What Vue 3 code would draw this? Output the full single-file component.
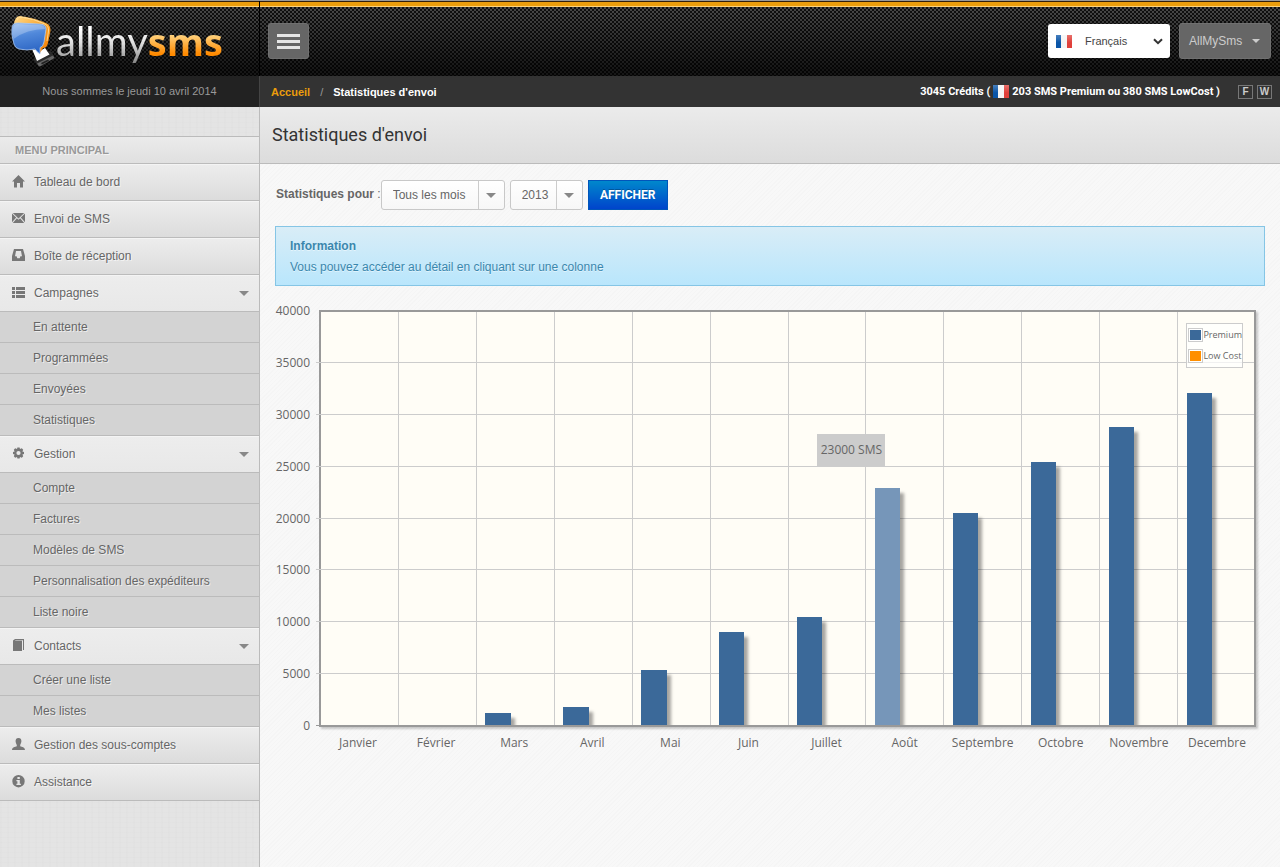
<script setup>
import { ref } from 'vue'

const month = ref('Tous les mois')
const year = ref('2013')
const lang = ref('Français')

const menu = [
  { label: 'Tableau de bord', icon: 'home' },
  { label: 'Envoi de SMS', icon: 'mail' },
  { label: 'Boîte de réception', icon: 'inbox' },
  { label: 'Campagnes', icon: 'list', items: ['En attente', 'Programmées', 'Envoyées', 'Statistiques'] },
  { label: 'Gestion', icon: 'cog', items: ['Compte', 'Factures', 'Modèles de SMS', 'Personnalisation des expéditeurs', 'Liste noire'] },
  { label: 'Contacts', icon: 'book', items: ['Créer une liste', 'Mes listes'] },
  { label: 'Gestion des sous-comptes', icon: 'user' },
  { label: 'Assistance', icon: 'info' },
]

const icons = {
  home: 'M6.5 0L13 6.6H11V12.5H8V8H5V12.5H2V6.6H0Z',
  mail: 'M0 1.5L4.2 5.6L0 10.2ZM0.8 1H12.2L6.5 6.6ZM13 1.5V10.2L8.8 5.6ZM0.8 11L4.9 6.3L6.5 7.8L8.1 6.3L12.2 11Z',
  inbox: 'M2 0H11L13 7V12H0V7ZM4 2L3 7.3H4.6L5.3 9.2H7.7L8.4 7.3H10L9 2Z',
  list: 'M0 1H3V4H0ZM4 1H13V4H4ZM0 5H3V8H0ZM4 5H13V8H4ZM0 9H3V12H0ZM4 9H13V12H4Z',
  cog: 'M5.4 0.5H7.6L8 2.1L9.8 1.3L11.2 2.7L10.4 4.4L12 4.9V7.1L10.4 7.6L11.2 9.3L9.8 10.7L8 9.9L7.6 11.5H5.4L5 9.9L3.2 10.7L1.8 9.3L2.6 7.6L1 7.1V4.9L2.6 4.4L1.8 2.7L3.2 1.3L5 2.1ZM6.5 3.9A2.1 2.1 0 1 0 6.5 8.1A2.1 2.1 0 1 0 6.5 3.9Z',
  book: 'M1 1.6L3 0H12V11H11V1.2H3.5L3 1.8H10V12H1Z',
  user: 'M6.5 0C8.8 0 9.6 1.7 9.4 3.6C9.2 5.2 8.5 6.3 8.2 7V8.3C10 9 12.8 9.3 13 12H0C0.2 9.3 3 9 4.8 8.3V7C4.4 6.3 3.8 5.2 3.6 3.6C3.4 1.7 4.2 0 6.5 0Z',
  info: 'M6.5 0A6.2 6.2 0 1 0 6.5 12.4A6.2 6.2 0 1 0 6.5 0ZM5.4 2H7.8V4H5.4ZM4.4 5H7.8V8.7H8.9V10H4.4V8.7H5.4V6.2H4.4Z',
}

const max = 40000
const ticks = [40000, 35000, 30000, 25000, 20000, 15000, 10000, 5000, 0]
const data = [
  { name: 'Janvier', sms: 0 },
  { name: 'Février', sms: 0 },
  { name: 'Mars', sms: 1200 },
  { name: 'Avril', sms: 1750 },
  { name: 'Mai', sms: 5300 },
  { name: 'Juin', sms: 9000 },
  { name: 'Juillet', sms: 10500 },
  { name: 'Août', sms: 23000, active: true },
  { name: 'Septembre', sms: 20500 },
  { name: 'Octobre', sms: 25500 },
  { name: 'Novembre', sms: 28850 },
  { name: 'Decembre', sms: 32200 },
]
</script>

<template>
  <div class="page">
    <header class="top">
      <div class="brand">
        <svg class="mark" viewBox="0 0 46 54" aria-hidden="true">
          <defs>
            <linearGradient id="gBlue" x1="0" y1="0" x2="0.2" y2="1">
              <stop offset="0" stop-color="#8fb8ef" />
              <stop offset="0.45" stop-color="#5088da" />
              <stop offset="1" stop-color="#2d66c4" />
            </linearGradient>
            <linearGradient id="gOrange" x1="0" y1="0" x2="1" y2="1">
              <stop offset="0" stop-color="#ffd98a" />
              <stop offset="0.5" stop-color="#f9a62c" />
              <stop offset="1" stop-color="#f57a00" />
            </linearGradient>
          </defs>
          <path d="M23 44L40 36Q42 36 44 42L30 51Q28 51 23 44Z" fill="#2b2b2b" />
          <path d="M27 48.5L43 40.5L44.5 43L30 51.5Q28.5 51.5 27 48.5Z" fill="#666" />
          <path d="M31 48L38 44.5L39 45.8L32 49.5Z" fill="#222" />
          <path d="M22 34L30 36L35 33L39.5 39.5L27 46Z" fill="#fff" />
          <path d="M4 9Q5 1 10 1Q25 3 36 8Q41 10 40.5 16L38 28Q37 33 33 33L30 38L28 30Z" fill="url(#gOrange)" />
          <path d="M7 5Q8 2 11 2Q25 4 35 9Q39 11 38.5 16L37 26" fill="none" stroke="#ffe3a6" stroke-width="0.8" />
          <path d="M2 13Q2 8 8 8L29 9Q36 9 36 14L34 27Q33 32 30 32.5V39Q27 37 25 34Q17 36 9 34Q5 33 4 29Q1 20 2 13Z" fill="url(#gBlue)" stroke="#a9c8f2" stroke-width="0.8" />
          <path d="M3 13Q3 9 8 9L29 10Q35 10 35 14Q17 14 3.5 24Q2 19 3 13Z" fill="#fff" opacity="0.25" />
        </svg>
        <span class="wordmark"><span class="silver">allmy</span><span class="gold">sms</span></span>
      </div>
      <div class="tools">
        <button class="burger" type="button" aria-label="Menu"><i></i><i></i><i></i></button>
        <label class="lang">
          <i class="flag"></i>
          <select v-model="lang" aria-label="Langue"><option>Français</option></select>
          <svg viewBox="0 0 10 7" aria-hidden="true"><path d="M1 1.2L5 5.2L9 1.2" fill="none" stroke="#333" stroke-width="2" /></svg>
        </label>
        <button class="account" type="button">AllMySms<i class="caret"></i></button>
      </div>
    </header>

    <div class="bar">
      <div class="date">Nous sommes le jeudi 10 avril 2014</div>
      <nav class="crumbs">
        <a href="#">Accueil</a><span class="sep">/</span><b>Statistiques d'envoi</b>
      </nav>
      <div class="credits">3045 Crédits (<i class="flag"></i>203 SMS Premium ou 380 SMS LowCost )</div>
      <div class="modes"><button type="button">F</button><button type="button">W</button></div>
    </div>

    <div class="body">
      <aside class="side">
        <h2>MENU PRINCIPAL</h2>
        <ul class="menu">
          <li v-for="m in menu" :key="m.label">
            <a href="#" class="entry" :class="{ open: m.items }">
              <svg viewBox="0 0 13 13" aria-hidden="true"><path :d="icons[m.icon]" fill-rule="evenodd" /></svg>
              <span>{{ m.label }}</span>
              <i v-if="m.items" class="caret"></i>
            </a>
            <ul v-if="m.items" class="sub">
              <li v-for="s in m.items" :key="s"><a href="#">{{ s }}</a></li>
            </ul>
          </li>
        </ul>
      </aside>

      <main class="main">
        <div class="title"><h1>Statistiques d'envoi</h1></div>
        <div class="content">
          <form class="filter" @submit.prevent>
            <label for="month"><b>Statistiques pour</b> :</label>
            <div class="pick month">
              <select id="month" v-model="month"><option>Tous les mois</option></select>
              <i class="caret"></i>
            </div>
            <div class="pick year">
              <select v-model="year" aria-label="Année"><option>2013</option></select>
              <i class="caret"></i>
            </div>
            <button class="go" type="submit">AFFICHER</button>
          </form>

          <div class="notice">
            <b>Information</b>
            <p>Vous pouvez accéder au détail en cliquant sur une colonne</p>
          </div>

          <div class="chart">
            <div class="yaxis"><span v-for="t in ticks" :key="t">{{ t }}</span></div>
            <div class="plot">
              <div class="rows"><i v-for="n in 8" :key="n"></i></div>
              <div class="cols">
                <div v-for="d in data" :key="d.name" class="col">
                  <div class="well">
                    <div
                      v-if="d.sms"
                      class="stick"
                      :class="{ active: d.active }"
                      :style="{ height: (d.sms / max) * 100 + '%' }"
                    ></div>
                  </div>
                  <div v-if="d.active" class="tip">{{ d.sms }} SMS</div>
                </div>
              </div>
              <div class="legend">
                <div><i class="key premium"></i>Premium</div>
                <div><i class="key low"></i>Low Cost</div>
              </div>
            </div>
            <div class="xaxis"><span v-for="d in data" :key="d.name">{{ d.name }}</span></div>
          </div>
        </div>
      </main>
    </div>
  </div>
</template>

<style>
html,
body,
#app {
  height: 100%;
}
</style>

<style scoped>
* {
  box-sizing: border-box;
}
.page {
  display: flex;
  flex-direction: column;
  min-height: 100%;
  font: 12px/20px "Liberation Sans", Arial, sans-serif;
  color: #666;
}
h1,
h2,
p,
ul {
  margin: 0;
  padding: 0;
}
ul {
  list-style: none;
}
a {
  color: inherit;
  text-decoration: none;
}
button,
select {
  font: inherit;
  color: inherit;
  border: 0;
  margin: 0;
  padding: 0;
  background: none;
  appearance: none;
}
.caret {
  width: 0;
  height: 0;
  border: 5px solid transparent;
  border-top-color: #888;
  border-bottom: 0;
}
.flag {
  display: inline-block;
  width: 16px;
  height: 13px;
  background:
    linear-gradient(rgba(255, 255, 255, 0.25), rgba(255, 255, 255, 0) 60%),
    linear-gradient(90deg, #0a55a8 33%, #f4f4f4 33% 66%, #e0403a 66%);
}

.top {
  display: flex;
  height: 76px;
  border-top: 1px solid #999;
  background:
    linear-gradient(#33200a 1px, #eb9d0c 1px 5px, #ffd479 5px 6px, transparent 6px),
    linear-gradient(rgba(0, 0, 0, 0), rgba(0, 0, 0, 0.7) 90%),
    conic-gradient(#4d4d4d 25%, #101010 0 50%, #4d4d4d 0 75%, #101010 0) 0 0 / 4px 4px;
}
.brand {
  display: flex;
  width: 260px;
  padding: 14px 0 0 10px;
  border-right: 1px solid #000;
}
.mark {
  flex: none;
  width: 46px;
  height: 54px;
}
.wordmark {
  font: 40px/48px Lato, sans-serif;
  margin-top: 2px;
}
.silver,
.gold {
  background: linear-gradient(#fff 25%, #ddd 55%, #888 95%);
  background-clip: text;
  color: transparent;
}
.gold {
  font: bold 38px/48px "Open Sans", sans-serif;
  background-image: linear-gradient(#ffd98a 35%, #ff8a00 75%);
}
.tools {
  display: flex;
  flex: 1;
  align-items: flex-start;
  padding: 22px 9px 0 8px;
}
.burger,
.account {
  height: 36px;
  border: 1px solid #707070;
  border-radius: 3px;
  background: #666;
}
.burger {
  display: flex;
  flex-direction: column;
  align-items: center;
  justify-content: center;
  gap: 3px;
  width: 41px;
}
.burger i {
  width: 23px;
  height: 3px;
  background: #e6e6e6;
}
.lang {
  display: flex;
  align-items: center;
  width: 122px;
  height: 34px;
  margin: 1px 9px 0 auto;
  padding: 0 7px 0 8px;
  border-radius: 3px;
  background: #fff;
  color: #444;
  font-size: 11px;
}
.lang select {
  flex: 1;
  padding-left: 13px;
}
.lang svg {
  width: 10px;
  height: 7px;
}
.account {
  display: flex;
  align-items: center;
  justify-content: space-between;
  width: 92px;
  padding: 0 10px 0 9px;
  color: #ccc;
}
.account .caret {
  border-width: 4px;
  border-bottom: 0;
  border-top-color: #ccc;
}

.bar {
  display: flex;
  align-items: center;
  height: 31px;
  padding-right: 8px;
  background: #333;
  font-size: 11px;
  color: #fff;
}
.date {
  width: 260px;
  line-height: 31px;
  text-align: center;
  background: #222;
  border-right: 1px solid #444;
  color: #999;
}
.crumbs {
  flex: 1;
  padding-left: 11px;
}
.crumbs a {
  color: #eb9d0c;
  font-weight: bold;
}
.sep {
  margin: 0 10px;
  color: #999;
}
.credits {
  display: flex;
  align-items: center;
  font-family: Roboto, sans-serif;
  font-weight: bold;
}
.credits .flag {
  margin: 0 3px;
}
.modes {
  display: flex;
  gap: 4px;
  margin-left: 18px;
}
.modes button {
  width: 15px;
  height: 14px;
  border: 1px solid #777;
  font: bold 10px/12px "Liberation Sans", sans-serif;
  color: #ccc;
}

.body {
  display: flex;
  flex: 1;
}
.side {
  width: 260px;
  flex: none;
  padding-top: 29px;
  border-right: 1px solid #bbb;
  background:
    repeating-linear-gradient(90deg, rgba(0, 0, 0, 0.008) 0 2px, transparent 2px 7px),
    repeating-linear-gradient(rgba(0, 0, 0, 0.008) 0 1px, transparent 1px 5px),
    #e4e4e4;
  text-shadow: 1px 1px 0 rgba(255, 255, 255, 0.6);
}
.side h2 {
  height: 28px;
  padding-left: 15px;
  border: solid #bbb;
  border-width: 1px 0;
  background: linear-gradient(#ebebeb, #e0e0e0);
  font: bold 11px/26px "Liberation Sans", sans-serif;
  color: #999;
}
.entry {
  display: flex;
  align-items: center;
  height: 37px;
  padding: 0 10px 0 12px;
  border-bottom: 1px solid #bbb;
  background: linear-gradient(#ededed, #dcdcdc);
  box-shadow: inset 0 1px 0 #f4f4f4;
}
.entry.open {
  background: linear-gradient(#ededed, #e8e8e8);
}
.entry svg {
  width: 13px;
  height: 13px;
  margin: 0 9px 1px 0;
  fill: #777;
}
.entry .caret {
  margin-left: auto;
}
.sub a {
  display: block;
  height: 31px;
  padding-left: 33px;
  line-height: 30px;
  border-bottom: 1px solid #bbb;
  background: #d3d3d3;
}

.main {
  flex: 1;
  min-width: 0;
  background:
    repeating-linear-gradient(135deg, rgba(0, 0, 0, 0.012) 0 1px, transparent 1px 3px),
    #f8f8f8;
}
.title {
  height: 57px;
  padding-left: 12px;
  border-bottom: 1px solid #bbb;
  background: linear-gradient(#ebebeb, #dcdcdc);
}
.title h1 {
  font: 18px/56px Roboto, sans-serif;
  color: #333;
}
.content {
  padding: 16px 15px;
}
.filter {
  display: flex;
  align-items: center;
  gap: 5px;
  height: 30px;
}
.filter label {
  margin: -2px -5px 0 1px;
}
.pick {
  display: flex;
  align-items: center;
  height: 30px;
  padding-right: 8px;
  border: 1px solid #c8c8c8;
  border-radius: 3px;
  background: linear-gradient(#fff, #f7f7f7);
}
.pick select {
  flex: 1;
  height: 28px;
  margin-right: 7px;
  padding-left: 11px;
  border-right: 1px solid #ccc;
}
.pick.month {
  width: 124px;
}
.pick.year {
  width: 73px;
}
.go {
  width: 80px;
  height: 30px;
  border: 1px solid #0055bb;
  background: linear-gradient(#0088cc, #0044cc);
  color: #fff;
  font: bold 12px/28px Roboto, sans-serif;
  text-shadow: 0 -1px 0 rgba(0, 0, 0, 0.25);
}
.notice {
  height: 60px;
  margin: 16px 0 24px;
  padding: 9px 14px;
  border: 1px solid #85c5e5;
  background: linear-gradient(#d9edf7, #b9e6fc);
  color: #3a87ad;
  text-shadow: 0 1px 0 rgba(255, 255, 255, 0.5);
}
.notice p {
  margin-top: 1px;
}

.chart {
  display: grid;
  grid-template-columns: 35px 1fr;
  column-gap: 9px;
  padding-right: 9px;
  font-family: "Open Sans", "Noto Sans", sans-serif;
}
.yaxis {
  display: flex;
  flex-direction: column;
  justify-content: space-between;
  margin: -7px 0;
  line-height: 16px;
  text-align: right;
}
.plot {
  position: relative;
  height: 417px;
  border: 2px solid #999;
  background: #fffdf6;
  box-shadow: 2px 2px 2px rgba(0, 0, 0, 0.2);
}
.rows {
  position: absolute;
  inset: -1px 0 -1px -5px;
  display: grid;
  grid-template-rows: repeat(8, 1fr);
}
.rows i {
  border-bottom: 1px solid #ccc;
}
.rows i:last-child {
  border-color: #999;
}
.cols {
  position: relative;
  display: flex;
  height: 100%;
  margin-right: -1px;
}
.col {
  position: relative;
  flex: 1;
  border-right: 1px solid #ccc;
}
.col:last-child {
  border-right: 0;
}
.well {
  display: flex;
  align-items: flex-end;
  height: 100%;
  overflow: hidden;
}
.stick {
  width: 33%;
  margin-left: 11%;
  background: #3b6999;
  box-shadow: 4px 5px 3px rgba(0, 0, 0, 0.35);
}
.stick.active {
  background: #7696b9;
}
.tip {
  position: absolute;
  right: 58px;
  top: 122px;
  width: 68px;
  padding: 6px 0;
  background: #ccc;
  text-align: center;
  white-space: nowrap;
}
.legend {
  position: absolute;
  top: 11px;
  right: 11px;
  padding: 0 0 1px 1px;
  border: 1px solid #ccc;
  background: rgba(255, 255, 255, 0.7);
  font-size: 9px;
  line-height: 21px;
}
.legend div {
  display: flex;
  align-items: center;
}
.key {
  width: 15px;
  height: 14px;
  border: 1px solid #ccc;
  box-shadow: inset 0 0 0 1px #fff;
}
.premium {
  background: #3b6999;
}
.low {
  background: #ff8f00;
}
.xaxis {
  grid-column: 2;
  display: grid;
  grid-template-columns: repeat(12, 1fr);
  padding-top: 6px;
  text-align: center;
}
</style>
